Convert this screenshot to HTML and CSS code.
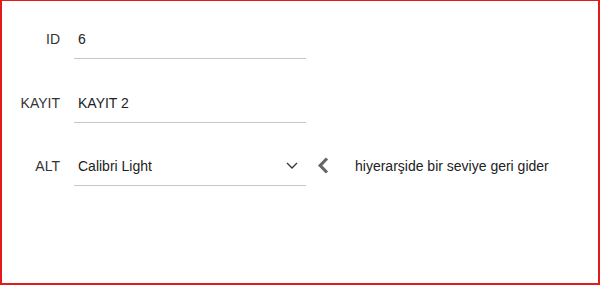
FILE: index.html
```html
<!DOCTYPE html>
<html lang="tr">
<head>
    <meta charset="UTF-8">
    <title>Kayıt</title>
    <link rel="stylesheet" href="styles.css">
</head>
<body>
    <div class="frame">
        <div class="row">
            <label class="label">ID</label>
            <div class="field"><span class="value">6</span></div>
        </div>
        <div class="row">
            <label class="label">KAYIT</label>
            <div class="field"><span class="value">KAYIT 2</span></div>
        </div>
        <div class="row">
            <label class="label">ALT</label>
            <div class="field">
                <span class="value">Calibri Light</span>
                <svg class="caret" width="12" height="7" viewBox="0 0 12 7">
                    <path d="M1 1 L6 6 L11 1" fill="none" stroke="#333" stroke-width="1.3"/>
                </svg>
            </div>
            <button class="back" title="geri">
                <svg width="12" height="17" viewBox="0 0 12 17">
                    <path d="M10 1.5 L3.2 8.5 L10 15.5" fill="none" stroke="#666" stroke-width="3.2"/>
                </svg>
            </button>
            <span class="hint">hiyerarşide bir seviye geri gider</span>
        </div>
    </div>
</body>
</html>
```

FILE: styles.css
```css
body { margin: 0; font-family: "Liberation Sans", Arial, sans-serif; background: #fff; }
.frame { width: 596px; height: 262px; border: 2px solid #e3191b; border-top-width: 1px; border-bottom-width: 3px; padding-top: 20px; display: flex; flex-direction: column; gap: 26px; }
.row { display: flex; align-items: center; height: 38px; }
.row:last-child { margin-top: -1px; }
.label { width: 58px; text-align: right; font-size: 14px; color: #333; margin-right: 14px; padding-bottom: 3px; }
.field { width: 228px; height: 35px; padding-left: 4px; padding-bottom: 2px; box-sizing: content-box; display: flex; align-items: center; border-bottom: 1px solid #c8c8c8; }
.value { flex: 1; font-size: 14px; color: #222; }
.caret { margin-right: 8px; }
.back { border: 0; background: none; padding: 0; margin-left: 11px; width: 14px; height: 17px; display: flex; align-items: center; margin-bottom: 3px; }
.hint { margin-left: 24px; font-size: 14px; color: #222; padding-bottom: 3px; }
```
